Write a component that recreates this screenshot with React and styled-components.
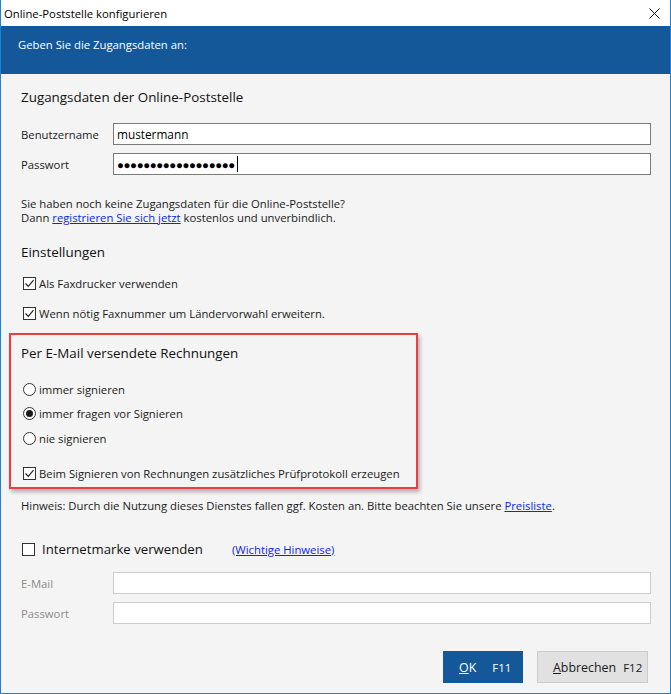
import React from 'react'
import styled, { createGlobalStyle } from 'styled-components'

const Global = createGlobalStyle`
  html, body { margin: 0; padding: 0; background: #f4f4f4; }
  * { box-sizing: border-box; }
`

const Win = styled.div`
  width: 671px;
  height: 694px;
  display: flex;
  flex-direction: column;
  border: 1px solid #1883d7;
  border-top: 0;
  background: #f4f4f4;
  font-family: "Open Sans", "Noto Sans", sans-serif;
  font-size: 11.3px;
  color: #1a1a1a;
  white-space: nowrap;
`
const TitleBar = styled.div`
  height: 26px;
  background: #fff;
  display: flex;
  align-items: center;
  justify-content: space-between;
  padding: 0 10px 0 3px;
  color: #000;
`
const Header = styled.div`
  height: 48px;
  background: #14589a;
  color: #fff;
  padding: 11px 0 0 17px;
`
const Body = styled.div`
  flex: 1;
  display: flex;
  flex-direction: column;
  padding: 13px 19px 10px 20px;
`
const Heading = styled.div`
  font-size: 13.4px;
  line-height: 20px;
  font-weight: 500;
  color: #111;
  margin-top: ${p => p.$mt || 0}px;
`
const FieldRow = styled.div`
  display: flex;
  align-items: center;
  height: 22px;
  margin-top: ${p => p.$mt}px;
`
const Label = styled.div`
  width: 92px;
  color: ${p => (p.$dim ? '#8c8c8c' : '#1a1a1a')};
`
const Field = styled.div`
  flex: 1;
  height: 22px;
  background: #fff;
  border: 1px solid ${p => (p.$dim ? '#cccccc' : '#7a7a7a')};
  display: flex;
  align-items: center;
  padding-left: 3px;
  font-size: 11.8px;
  color: #000;
`
const Dots = styled.span`
  letter-spacing: -0.4px;
  font-size: 11.5px;
`
const Caret = styled.span`
  display: inline-block;
  width: 1px;
  height: 16px;
  background: #000;
  margin-left: 2px;
`
const Line = styled.div`
  line-height: 14px;
  height: 14px;
  margin-top: ${p => p.$mt || 0}px;
`
const Link = styled.a`
  color: #0b24ee;
  text-decoration: underline;
  cursor: pointer;
`
const Check = styled.div`
  display: flex;
  align-items: center;
  height: 20px;
  margin-top: ${p => p.$mt}px;
  padding-left: 2px;
  gap: 3px;
`
const Box = styled.span`
  width: 13px;
  height: 13px;
  border: 1px solid #333;
  background: #fff;
  display: inline-flex;
  align-items: center;
  justify-content: center;
`
const Radio = styled.span`
  width: 13px;
  height: 13px;
  border-radius: 50%;
  border: 1px solid #333;
  background: #fff;
  display: inline-flex;
  align-items: center;
  justify-content: center;
  &::after {
    content: '';
    width: 7px;
    height: 7px;
    border-radius: 50%;
    background: ${p => (p.$on ? '#1a1a1a' : 'transparent')};
  }
`
const RedFrame = styled.div`
  width: 409px;
  margin: 10px 0 0 -12px;
  border: 2px solid #ec3d45;
  box-shadow: 2px 3px 4px rgba(0, 0, 0, 0.28);
  padding: 8px 10px 4px 10px;
  display: flex;
  flex-direction: column;
`
const InetRow = styled.div`
  display: flex;
  align-items: center;
  height: 20px;
  margin-top: 26px;
  padding-left: 1px;
`
const BigBox = styled.span`
  width: 13px;
  height: 13px;
  border: 1px solid #333;
  background: #fff;
  margin-right: 7px;
`
const InetText = styled.span`
  font-size: 13.2px;
  width: 190px;
  color: #111;
`
const Footer = styled.div`
  margin-top: auto;
  display: flex;
  justify-content: flex-end;
  gap: 14px;
  padding-right: 3px;
`
const Btn = styled.div`
  height: 32px;
  width: ${p => p.$w}px;
  display: flex;
  align-items: center;
  padding-left: ${p => p.$pl}px;
  background: ${p => (p.$primary ? '#14589a' : '#e1e1e1')};
  border: 1px solid ${p => (p.$primary ? '#14589a' : '#cccccc')};
  color: ${p => (p.$primary ? '#fff' : '#1a1a1a')};
  font-size: 12.4px;
  u { text-decoration: underline; }
`
const Key = styled.span`
  margin-left: ${p => p.$ml}px;
  font-size: 11.5px;
`

const CheckMark = () => (
  <svg width="11" height="11" viewBox="0 0 11 11">
    <path d="M1.5 5.5 L4.3 8.3 L9.5 2.2" fill="none" stroke="#222" strokeWidth="1.2" />
  </svg>
)

const CloseIcon = () => (
  <svg width="11" height="11" viewBox="0 0 11 11">
    <path d="M0.5 0.5 L10.5 10.5 M10.5 0.5 L0.5 10.5" stroke="#111" strokeWidth="1" />
  </svg>
)

export default function App() {
  return (
    <Win>
      <Global />
      <TitleBar>
        <span>Online-Poststelle konfigurieren</span>
        <CloseIcon />
      </TitleBar>
      <Header>Geben Sie die Zugangsdaten an:</Header>
      <Body>
        <Heading>Zugangsdaten der Online-Poststelle</Heading>
        <FieldRow $mt={16}>
          <Label>Benutzername</Label>
          <Field>mustermann</Field>
        </FieldRow>
        <FieldRow $mt={8}>
          <Label>Passwort</Label>
          <Field>
            <Dots>{'●'.repeat(18)}</Dots>
            <Caret />
          </Field>
        </FieldRow>
        <Line $mt={22}>Sie haben noch keine Zugangsdaten für die Online-Poststelle?</Line>
        <Line>
          Dann <Link>registrieren Sie sich jetzt</Link> kostenlos und unverbindlich.
        </Line>
        <Heading $mt={17}>Einstellungen</Heading>
        <Check $mt={11}>
          <Box><CheckMark /></Box>
          <span>Als Faxdrucker verwenden</span>
        </Check>
        <Check $mt={10}>
          <Box><CheckMark /></Box>
          <span>Wenn nötig Faxnummer um Ländervorwahl erweitern.</span>
        </Check>
        <RedFrame>
          <Heading>Per E-Mail versendete Rechnungen</Heading>
          <Check $mt={16}>
            <Radio />
            <span>immer signieren</span>
          </Check>
          <Check $mt={4}>
            <Radio $on />
            <span>immer fragen vor Signieren</span>
          </Check>
          <Check $mt={5}>
            <Radio />
            <span>nie signieren</span>
          </Check>
          <Check $mt={15}>
            <Box><CheckMark /></Box>
            <span>Beim Signieren von Rechnungen zusätzliches Prüfprotokoll erzeugen</span>
          </Check>
        </RedFrame>
        <Line $mt={10}>
          Hinweis: Durch die Nutzung dieses Dienstes fallen ggf. Kosten an. Bitte beachten Sie unsere{' '}
          <Link>Preisliste</Link>.
        </Line>
        <InetRow>
          <BigBox />
          <InetText>Internetmarke verwenden</InetText>
          <Link>(Wichtige Hinweise)</Link>
        </InetRow>
        <FieldRow $mt={13}>
          <Label $dim>E-Mail</Label>
          <Field $dim />
        </FieldRow>
        <FieldRow $mt={8}>
          <Label $dim>Passwort</Label>
          <Field $dim />
        </FieldRow>
        <Footer>
          <Btn $primary $w={80} $pl={15}>
            <span><u>O</u>K</span>
            <Key $ml={16}>F11</Key>
          </Btn>
          <Btn $w={111} $pl={15}>
            <span><u>A</u>bbrechen</span>
            <Key $ml={7}>F12</Key>
          </Btn>
        </Footer>
      </Body>
    </Win>
  )
}
